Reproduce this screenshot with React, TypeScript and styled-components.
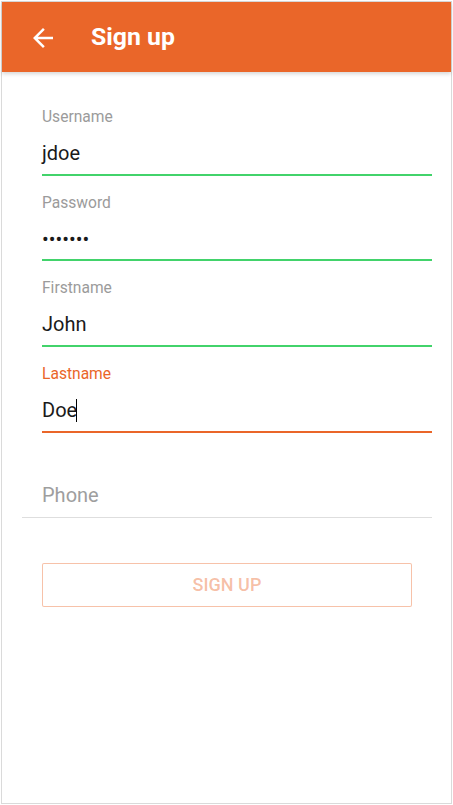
import React from "react";
import styled, { createGlobalStyle } from "styled-components";

const ORANGE = "#ea6629";
const GREEN = "#42d36b";

const Global = createGlobalStyle`
  html, body { margin: 0; padding: 0; background: #ffffff; }
  body { font-family: Roboto, "Noto Sans", Arial, sans-serif; }
  * { box-sizing: border-box; }
`;

const Frame = styled.div`
  margin: 1px 0 0 1px;
  width: 451px;
  height: 803px;
  border: 1px solid #dadada;
  display: flex;
  flex-direction: column;
  background: #ffffff;
`;

const Header = styled.header`
  position: relative;
  z-index: 1;
  height: 70px;
  flex: none;
  background: ${ORANGE};
  display: flex;
  align-items: center;
  box-shadow: 0 2px 4px rgba(0, 0, 0, 0.16);
`;

const BackButton = styled.button`
  margin: 1px 0 0 25.5px;
  padding: 0;
  width: 30px;
  height: 30px;
  border: none;
  background: transparent;
  display: flex;
  color: #ffffff;
  cursor: pointer;
`;

const Title = styled.h1`
  margin: 0 0 0 33.5px;
  font-family: Roboto, Arial, sans-serif;
  font-weight: 700;
  font-size: 24.8px;
  line-height: 28px;
  color: #ffffff;
`;

const Content = styled.main`
  flex: 1;
  padding: 36px 19px 0 20px;
  display: flex;
  flex-direction: column;
`;

const Field = styled.div`
  padding-left: 20px;
  margin-bottom: 17.9px;
  display: flex;
  flex-direction: column;
`;

const Label = styled.label<{ $active?: boolean }>`
  font-size: 15.6px;
  line-height: 18px;
  color: ${(p) => (p.$active ? ORANGE : "#9b9b9b")};
  margin-bottom: 15px;
`;

const InputBox = styled.div<{ $line: string }>`
  padding-bottom: 8.8px;
  border-bottom: 2px solid ${(p) => p.$line};
`;

const Value = styled.div<{ $placeholder?: boolean }>`
  display: flex;
  align-items: center;
  height: 24px;
  font-size: 20px;
  line-height: 24px;
  color: ${(p) => (p.$placeholder ? "#9e9e9e" : "#1a1a1a")};
  white-space: pre;
`;

const Caret = styled.span`
  display: inline-block;
  width: 1px;
  height: 23px;
  margin-left: -1px;
  background: #000000;
`;

const PlainItem = styled.div`
  padding: 32px 0 10.1px 20px;
  border-bottom: 1px solid #dedede;
`;

const SignUpButton = styled.button`
  margin: 45px 20px 0;
  height: 44px;
  border: 1px solid rgba(234, 102, 41, 0.4);
  border-radius: 2px;
  background: #ffffff;
  color: rgba(234, 102, 41, 0.42);
  font-family: Roboto, Arial, sans-serif;
  font-weight: 500;
  font-size: 18px;
  text-transform: uppercase;
  cursor: default;
`;

const BackIcon = () => (
  <svg width="30" height="30" viewBox="0 0 24 24" fill="currentColor" aria-hidden>
    <path d="M20 11H7.83l5.59-5.59L12 4l-8 8 8 8 1.41-1.41L7.83 13H20v-2z" />
  </svg>
);

type FieldData = { label: string; value: string; line: string; active?: boolean; caret?: boolean };

const fields: FieldData[] = [
  { label: "Username", value: "jdoe", line: GREEN },
  { label: "Password", value: "•••••••", line: GREEN },
  { label: "Firstname", value: "John", line: GREEN },
  { label: "Lastname", value: "Doe", line: ORANGE, active: true, caret: true },
];

export default function App() {
  return (
    <>
      <Global />
      <Frame>
        <Header>
          <BackButton aria-label="Back">
            <BackIcon />
          </BackButton>
          <Title>Sign up</Title>
        </Header>
        <Content>
          {fields.map((f) => (
            <Field key={f.label}>
              <Label $active={f.active}>{f.label}</Label>
              <InputBox $line={f.line}>
                <Value>
                  {f.value}
                  {f.caret && <Caret />}
                </Value>
              </InputBox>
            </Field>
          ))}
          <PlainItem>
            <Value $placeholder>Phone</Value>
          </PlainItem>
          <SignUpButton disabled>Sign up</SignUpButton>
        </Content>
      </Frame>
    </>
  );
}
